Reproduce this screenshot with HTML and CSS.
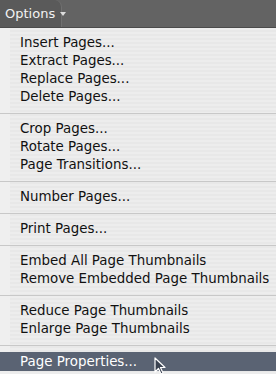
FILE: index.html
```html
<!DOCTYPE html>
<html lang="en">
<head>
  <meta charset="UTF-8">
  <title>Options menu</title>
  <link rel="stylesheet" href="styles.css">
</head>
<body>

	<div class="toolbar">
		<div class="options">Options <span class="caret"></span></div>
	</div>

	<div class="menu">
		<ul class="items">
			<li>Insert Pages...</li>
			<li>Extract Pages...</li>
			<li>Replace Pages...</li>
			<li>Delete Pages...</li>
			<li class="sep"></li>
			<li>Crop Pages...</li>
			<li>Rotate Pages...</li>
			<li>Page Transitions...</li>
			<li class="sep"></li>
			<li>Number Pages...</li>
			<li class="sep"></li>
			<li>Print Pages...</li>
			<li class="sep"></li>
			<li>Embed All Page Thumbnails</li>
			<li>Remove Embedded Page Thumbnails</li>
			<li class="sep"></li>
			<li>Reduce Page Thumbnails</li>
			<li>Enlarge Page Thumbnails</li>
			<li class="sep"></li>
			<li class="active">Page Properties...</li>
		</ul>

		<svg class="cursor" width="12" height="18" viewBox="0 0 12 18">
			<path d="M1 1 L1 15 L4.5 11.5 L7 17 L9 16 L6.5 10.5 L11 10.5 Z" fill="#3a4250" stroke="#fff" stroke-width="1.2" stroke-linejoin="round"/>
		</svg>
	</div>

</body>
</html>
```

FILE: styles.css
```css
body {
	padding: 0;
	margin: 0;
	width: 276px;
	height: 374px;
	overflow: hidden;
	font-family: "DejaVu Sans", "Liberation Sans", sans-serif;
	background: #ececec;
}

.toolbar {
	height: 27px;
	background-color: #636363;
	border-bottom: 1px solid #4b4b4b;
	display: flex;
}

.options {
	width: 56px;
	padding-left: 5px;
	background-color: #5a5a5a;
	border-right: 1px solid #707070;
	border-top-right-radius: 7px;
	color: #f2f2f2;
	font-size: 13px;
	line-height: 28px;
	display: flex;
	align-items: center;
	gap: 5px;
}

.caret {
	width: 0;
	height: 0;
	border-left: 3px solid transparent;
	border-right: 3px solid transparent;
	border-top: 4px solid #dddddd;
	margin-top: 1px;
}

.menu {
	position: relative;
	height: 346px;
	padding-top: 6px;
	box-sizing: border-box;
	background-color: #ececec;
	background-image: repeating-linear-gradient(to bottom, #ededed 0, #ededed 2px, #e8e8e8 2px, #e8e8e8 4px);
	border-left: 10px solid #efefef;
}

.items {
	margin: 0 0 0 -10px;
	padding: 0;
	list-style-type: none;
}

.items li {
	height: 18px;
	line-height: 18px;
	padding-left: 20px;
	font-size: 13.4px;
	color: #111111;
	white-space: nowrap;
}

.items li.sep {
	height: 14px;
	display: flex;
	align-items: center;
	padding-left: 0;
}

.items li.sep::before {
	content: '';
	flex: 1;
	border-top: 1px solid #c8c8c8;
}

.items li.active {
	height: 19px;
	line-height: 19px;
	background-color: #5a6373;
	color: #ffffff;
}

.cursor {
	position: absolute;
	left: 144px;
	top: 329px;
}
```
